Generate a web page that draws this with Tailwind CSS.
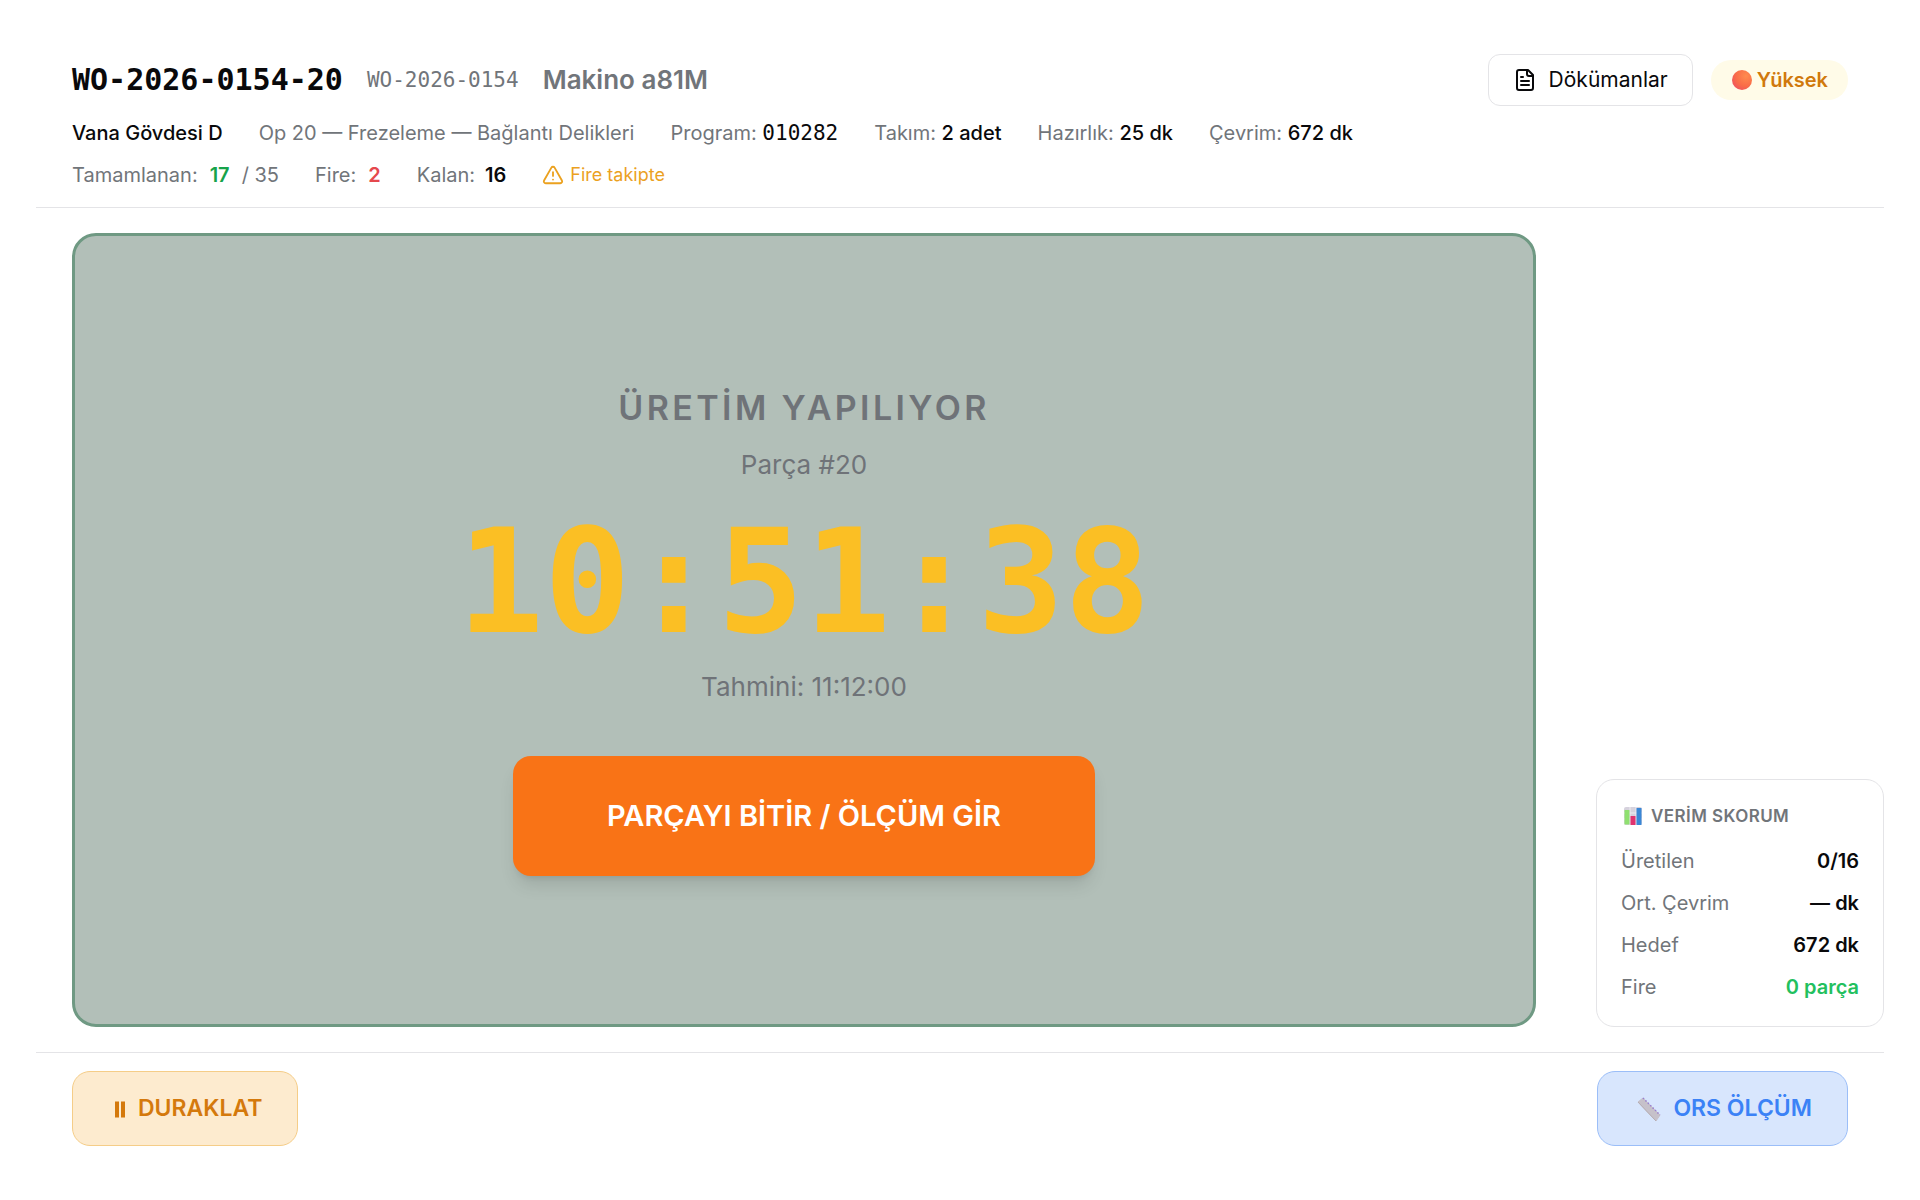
<!DOCTYPE html>
<html lang="tr">
<head>
<meta charset="utf-8">
<meta name="viewport" content="width=device-width, initial-scale=1">
<title>WO-2026-0154-20</title>
<script src="https://cdn.jsdelivr.net/npm/@tailwindcss/browser@4"></script>
</head>
<body class="flex min-h-screen flex-col bg-white p-9 font-['Inter',sans-serif] text-xl leading-[30px] text-[#09090b]">
  <header class="border-b border-[#e4e4e7] px-9 pt-[18px] pb-[17px]">
    <div class="flex items-center justify-between">
      <div class="flex items-center gap-6">
        <h1 class="font-['DejaVu_Sans_Mono',monospace] text-[30px] font-bold">WO-2026-0154-20</h1>
        <span class="font-['DejaVu_Sans_Mono',monospace] text-[21px] text-[#71757a]">WO-2026-0154</span>
        <span class="text-[26px] font-semibold text-[#71757a]">Makino a81M</span>
      </div>
      <div class="flex items-center gap-[18px]">
        <button type="button" class="flex items-center gap-3 rounded-xl border border-[#e4e4e7] bg-white px-6 py-[10px] text-[21px] leading-[30px]">
          <svg class="size-6" viewBox="0 0 24 24" fill="none" stroke="currentColor" stroke-width="2" stroke-linecap="round" stroke-linejoin="round" aria-hidden="true"><path d="M15 2H6a2 2 0 0 0-2 2v16a2 2 0 0 0 2 2h12a2 2 0 0 0 2-2V7Z"/><path d="M14 2v4a2 2 0 0 0 2 2h4"/><path d="M10 9H8"/><path d="M16 13H8"/><path d="M16 17H8"/></svg>
          Dökümanlar
        </button>
        <span class="flex items-center gap-1 rounded-full bg-[#fffbe8] px-5 py-[5px] font-semibold text-[#d0790c]">
          <svg class="size-[22px]" viewBox="0 0 22 22" aria-hidden="true"><defs><radialGradient id="ball" cx="0.7" cy="0.3" r="0.85"><stop offset="0" stop-color="#ff8b4e"/><stop offset="0.6" stop-color="#f96c48"/><stop offset="1" stop-color="#ee4f60"/></radialGradient></defs><circle cx="11" cy="11" r="10" fill="url(#ball)"/></svg>
          Yüksek
        </span>
      </div>
    </div>
    <div class="mt-3 flex flex-wrap gap-x-9 text-[#71757a]">
      <span class="font-medium text-[#09090b]">Vana Gövdesi D</span>
      <span>Op 20 — Frezeleme — Bağlantı Delikleri</span>
      <span>Program: <span class="font-['DejaVu_Sans_Mono',monospace] text-[21px] text-[#09090b]">010282</span></span>
      <span>Takım: <span class="font-medium text-[#09090b]">2 adet</span></span>
      <span>Hazırlık: <span class="font-medium text-[#09090b]">25 dk</span></span>
      <span>Çevrim: <span class="font-medium text-[#09090b]">672 dk</span></span>
    </div>
    <div class="mt-3 flex flex-wrap gap-x-9 text-[#71757a]">
      <span class="flex gap-3">Tamamlanan: <b class="font-semibold text-[#16a34a]">17</b> <span>/ 35</span></span>
      <span class="flex gap-3">Fire: <b class="font-semibold text-[#e5484d]">2</b></span>
      <span class="flex gap-2.5">Kalan: <b class="font-semibold text-[#09090b]">16</b></span>
      <span class="flex items-center gap-1.5 text-lg leading-[30px] text-[#eba11f]">
        <svg class="size-[22px]" viewBox="0 0 24 24" fill="none" stroke="currentColor" stroke-width="2" stroke-linecap="round" stroke-linejoin="round" aria-hidden="true"><path d="m21.730 18-8-14a2 2 0 0 0-3.480 0l-8 14A2 2 0 0 0 4 21h16a2 2 0 0 0 1.730-3"/><path d="M12 9v4"/><path d="M12 17h.01"/></svg>
        Fire takipte
      </span>
    </div>
  </header>

  <main class="flex flex-1 gap-[60px] py-[25px] pl-9">
    <section class="flex flex-1 flex-col items-center justify-center rounded-3xl border-3 border-[#6f9983] bg-[#b2bfb8] text-[#6f7378]">
      <h2 class="text-[34px] leading-[48px] font-semibold tracking-widest">ÜRETİM YAPILIYOR</h2>
      <p class="mt-3 text-[26px] leading-[42px]">Parça #20</p>
      <p class="mt-6 font-['DejaVu_Sans_Mono',monospace] text-[144px] leading-[144px] font-bold text-[#fbbf24]">10:51:38</p>
      <p class="mt-3 text-[26px] leading-[42px]">Tahmini: 11:12:00</p>
      <button type="button" class="mt-12 rounded-[18px] bg-[#f97316] px-[94px] py-9 text-[29px] leading-[48px] font-semibold text-white shadow-[0_12px_18px_-4px_rgb(0_0_0/0.12),0_5px_7px_-5px_rgb(0_0_0/0.12)]">PARÇAYI BİTİR / ÖLÇÜM GİR</button>
    </section>

    <aside class="w-72 self-end rounded-[18px] border border-[#e4e4e7] bg-white p-6">
      <h3 class="flex items-center gap-1.5 text-[17px] leading-6 font-semibold tracking-wide text-[#71757a]">
        <svg class="size-6" viewBox="0 0 24 24" aria-hidden="true"><rect x="3" y="3" width="18" height="18" rx="2" fill="#d6d2dd"/><path d="M3 9h18M3 15h18M9 3v18M15 3v18" stroke="#eeecf2"/><rect x="3.500" y="6" width="5" height="14.500" rx="0.500" fill="#8fe070"/><rect x="9.500" y="12" width="5" height="9" rx="0.500" fill="#e0336f"/><rect x="15.500" y="4" width="5" height="17" rx="0.500" fill="#3a87d6"/></svg>
        VERİM SKORUM
      </h3>
      <dl class="mt-[18px] flex flex-col gap-3">
        <div class="flex justify-between"><dt class="text-[#71757a]">Üretilen</dt><dd class="font-semibold">0/16</dd></div>
        <div class="flex justify-between"><dt class="text-[#71757a]">Ort. Çevrim</dt><dd class="font-semibold">— dk</dd></div>
        <div class="flex justify-between"><dt class="text-[#71757a]">Hedef</dt><dd class="font-semibold">672 dk</dd></div>
        <div class="flex justify-between"><dt class="text-[#71757a]">Fire</dt><dd class="font-semibold text-[#22c05e]">0 parça</dd></div>
      </dl>
    </aside>
  </main>

  <footer class="flex items-center justify-between border-t border-[#e4e4e7] px-9 py-[18px]">
    <button type="button" class="flex items-center gap-1.5 rounded-[18px] border border-[#f5cd88] bg-[#fdebcf] px-[35px] py-5 text-[23px] leading-[33px] font-semibold text-[#d4790c]">
      <svg class="size-6" viewBox="0 0 24 24" fill="currentColor" aria-hidden="true"><path d="M7 4.500h4v16H7zM13 4.500h4v16h-4z"/></svg>
      DURAKLAT
    </button>
    <button type="button" class="flex items-center gap-2 rounded-[18px] border border-[#9bbef8] bg-[#d8e6fd] px-[35px] py-5 text-[23px] leading-[33px] font-semibold text-[#3b82f6]">
      <svg class="size-8" viewBox="0 0 32 32" aria-hidden="true"><path d="M5 9 10 5 27 22 23 28Z" fill="#c6c1ca" stroke="#c6c1ca" stroke-linejoin="round"/><path d="M5 9 23 28" stroke="#b6aeb2"/><path d="M10 5 27 22" stroke="#9a7fd0" stroke-width="1.500" stroke-dasharray="1.500 1.900"/></svg>
      ORS ÖLÇÜM
    </button>
  </footer>
</body>
</html>
